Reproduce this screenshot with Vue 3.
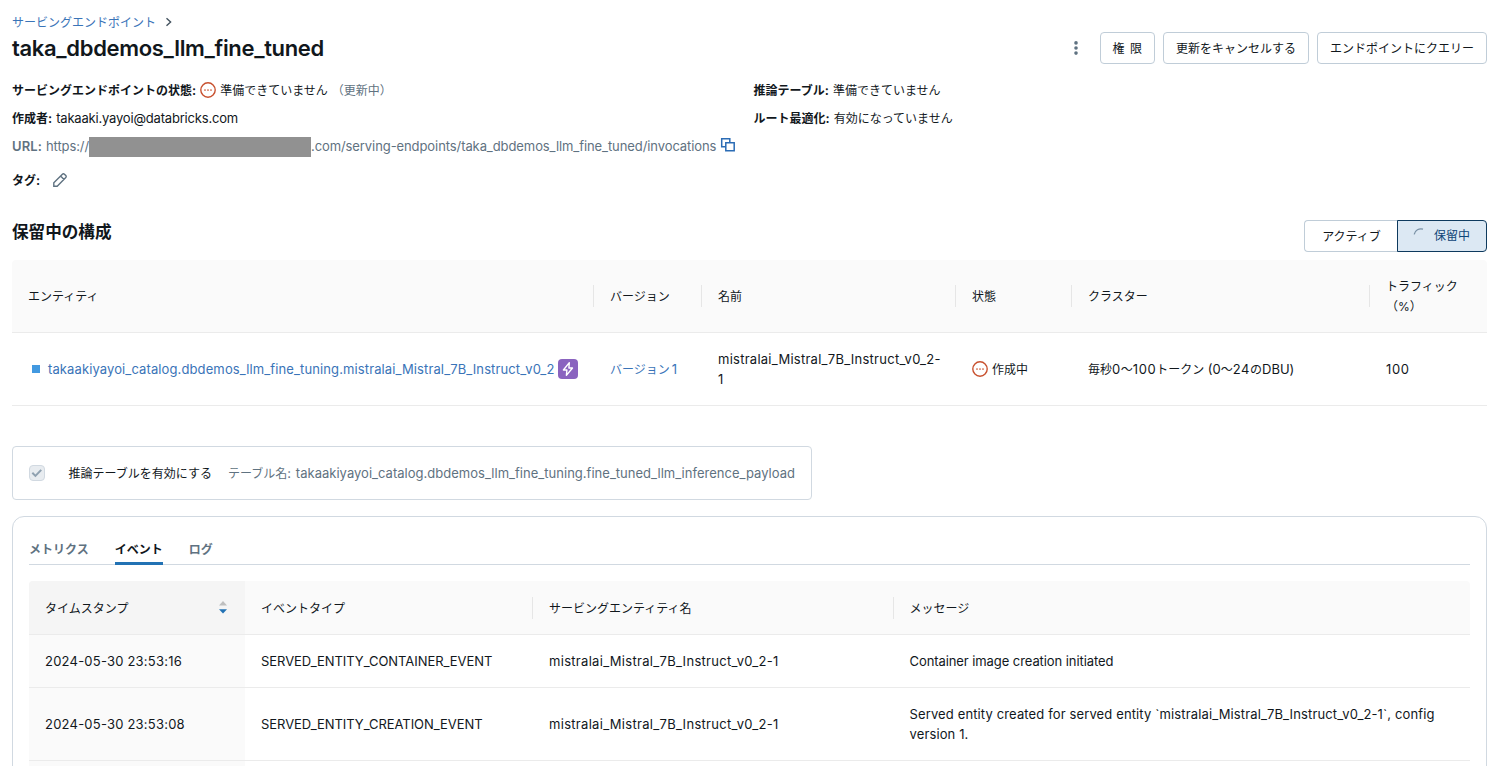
<template>
  <div class="page">
    <nav class="breadcrumb">
      <a href="#" class="link ja">サービングエンドポイント</a>
      <svg class="breadcrumb__arrow" viewBox="0 0 8 10" aria-hidden="true">
        <path d="M1.5 1.2L5.6 5l-4.1 3.8" fill="none" stroke="currentColor" stroke-width="1.4" />
      </svg>
    </nav>

    <header class="header">
      <h1 class="header__title">taka_dbdemos_llm_fine_tuned</h1>
      <div class="header__actions">
        <svg class="header__more" viewBox="0 0 16 16" aria-label="more">
          <circle cx="8" cy="2.9" r="1.8" />
          <circle cx="8" cy="8" r="1.8" />
          <circle cx="8" cy="13.1" r="1.8" />
        </svg>
        <button class="btn btn--short">権 限</button>
        <button class="btn">更新をキャンセルする</button>
        <button class="btn">エンドポイントにクエリー</button>
      </div>
    </header>

    <section class="details">
      <div class="details__col">
        <div class="details__row">
          <b>サービングエンドポイントの状態<i class="en">:</i></b>
          <svg class="status" viewBox="0 0 16 16" aria-hidden="true">
            <circle cx="8" cy="8" r="7.2" class="status__ring" />
            <circle v-for="x in [5, 8, 11]" :key="x" :cx="x" cy="8" r="0.85" class="status__dot" />
          </svg>
          <span class="ja">準備できていません</span>
          <span class="ja muted">（更新中）</span>
        </div>
        <div class="details__row">
          <b>作成者<i class="en">:</i></b>
          <span class="en en--email">takaaki.yayoi@databricks.com</span>
        </div>
        <div class="details__row muted">
          <b class="en en--label">URL:</b>
          <span class="url">
            <span class="en en--scheme">https://</span>
            <span class="url__mask"></span>
            <span class="en en--url">.com/serving-endpoints/taka_dbdemos_llm_fine_tuned/invocations</span>
          </span>
          <svg class="copy" viewBox="0 0 16 16" aria-hidden="true">
            <path
              d="M5.2 9.8H1.7V1.7H9.8v3.4M5.8 5.8h8.4v8H5.8z"
              fill="none"
              stroke="currentColor"
              stroke-width="1.5"
            />
          </svg>
        </div>
        <div class="details__row details__row--tags">
          <b>タグ<i class="en">:</i></b>
          <svg class="pencil" viewBox="0 0 16 16" aria-hidden="true">
            <path
              d="M1.8 14.2v-3.4l8.6-8.6a1.4 1.4 0 0 1 2 0l1.4 1.4a1.4 1.4 0 0 1 0 2l-8.6 8.6zM8.6 4l3.4 3.4"
              fill="none"
              stroke="currentColor"
              stroke-width="1.4"
            />
          </svg>
        </div>
      </div>
      <div class="details__col">
        <div class="details__row">
          <b>推論テーブル<i class="en">:</i></b>
          <span class="ja">準備できていません</span>
        </div>
        <div class="details__row">
          <b>ルート最適化<i class="en">:</i></b>
          <span class="ja">有効になっていません</span>
        </div>
      </div>
    </section>

    <section class="config">
      <h2 class="config__title">保留中の構成</h2>
      <div class="segmented">
        <button class="segmented__item">アクティブ</button>
        <button class="segmented__item segmented__item--active">
          <svg class="spinner" viewBox="0 0 16 16" aria-hidden="true">
            <path d="M2.2 6.4A6.8 6.8 0 0 1 11 1.2" fill="none" stroke="currentColor" stroke-width="1.3" />
          </svg>
          保留中
        </button>
      </div>
    </section>

    <div class="table table--entities">
      <div class="table__row table__row--head">
        <div v-for="col in entityColumns" :key="col" class="table__cell">{{ col }}</div>
      </div>
      <div class="table__row">
        <div class="table__cell table__cell--entity">
          <span class="marker"></span>
          <a href="#" class="link en en--entity">takaakiyayoi_catalog.dbdemos_llm_fine_tuning.mistralai_Mistral_7B_Instruct_v0_2</a>
          <svg class="bolt" viewBox="0 0 20 20" aria-hidden="true">
            <rect width="20" height="20" rx="4" fill="#8a63bf" />
            <path
              d="M11.3 3.6L5.4 11h3.5l-.5 5.4L14.5 9h-3.6z"
              fill="none"
              stroke="#fff"
              stroke-width="1.4"
              stroke-linejoin="round"
            />
          </svg>
        </div>
        <div class="table__cell"><a href="#" class="link">バージョン<span class="en en--version">1</span></a></div>
        <div class="table__cell en en--name">mistralai_Mistral_7B_Instruct_v0_2-<br />1</div>
        <div class="table__cell table__cell--status">
          <svg class="status" viewBox="0 0 16 16" aria-hidden="true">
            <circle cx="8" cy="8" r="7.2" class="status__ring" />
            <circle v-for="x in [5, 8, 11]" :key="x" :cx="x" cy="8" r="0.85" class="status__dot" />
          </svg>
          <span class="ja">作成中</span>
        </div>
        <div class="table__cell">
          <div>毎秒<span class="en en--num">0</span>〜<span class="en en--num">100</span>トークン <span class="en">(0</span>〜<span class="en en--num">24</span>の<span class="en">DBU)</span></div>
        </div>
        <div class="table__cell en en--num">100</div>
      </div>
    </div>

    <div class="inference">
      <span class="checkbox">
        <svg viewBox="0 0 14 14" aria-hidden="true">
          <path d="M2.4 7l3.2 3.2 6-6.2" fill="none" stroke="currentColor" stroke-width="2.1" />
        </svg>
      </span>
      <span class="inference__label ja">推論テーブルを有効にする</span>
      <span class="muted">テーブル名<span class="en en--colon">: </span><span class="en en--payload">takaakiyayoi_catalog.dbdemos_llm_fine_tuning.fine_tuned_llm_inference_payload</span></span>
    </div>

    <section class="panel">
      <div class="tabs">
        <a
          v-for="tab in tabs"
          :key="tab"
          href="#"
          class="tabs__item"
          :class="{ 'tabs__item--active': tab === activeTab }"
        >{{ tab }}</a>
      </div>

      <div class="table table--events">
        <div class="table__row table__row--head">
          <div class="table__cell table__cell--sorted">
            タイムスタンプ
            <svg class="sorter" viewBox="0 0 8 13" aria-hidden="true">
              <path d="M0 4.4L4 0l4 4.4z" fill="#bfbfbf" />
              <path d="M0 8.2h8l-4 4.4z" fill="#2272b4" />
            </svg>
          </div>
          <div class="table__cell">イベントタイプ</div>
          <div class="table__cell">サービングエンティティ名</div>
          <div class="table__cell">メッセージ</div>
        </div>
        <div v-for="event in events" :key="event.time" class="table__row" :class="{ 'table__row--tall': event.tall }">
          <div class="table__cell table__cell--sorted en en--time">{{ event.time }}</div>
          <div class="table__cell en en--type">{{ event.type }}</div>
          <div class="table__cell en en--served">{{ event.entity }}</div>
          <div class="table__cell en" :class="event.tall ? 'en--long' : 'en--message'">{{ event.message }}</div>
        </div>
      </div>
    </section>
  </div>
</template>

<script setup>
import { ref } from 'vue'

const entityColumns = ['エンティティ', 'バージョン', '名前', '状態', 'クラスター', 'トラフィック（%）']

const tabs = ['メトリクス', 'イベント', 'ログ']
const activeTab = ref('イベント')

const events = [
  {
    time: '2024-05-30 23:53:16',
    type: 'SERVED_ENTITY_CONTAINER_EVENT',
    entity: 'mistralai_Mistral_7B_Instruct_v0_2-1',
    message: 'Container image creation initiated',
  },
  {
    time: '2024-05-30 23:53:08',
    type: 'SERVED_ENTITY_CREATION_EVENT',
    entity: 'mistralai_Mistral_7B_Instruct_v0_2-1',
    message: 'Served entity created for served entity `mistralai_Mistral_7B_Instruct_v0_2-1`, config version 1.',
    tall: true,
  },
  { time: '', type: '', entity: '', message: '' },
]
</script>

<style>
body {
  margin: 0;
  overflow: hidden;
}
</style>

<style scoped>
.page {
  box-sizing: border-box;
  height: 766px;
  overflow: hidden;
  padding: 12px 2px 0 12px;
  background: #fff;
  color: #11171c;
  font-family: Inter, "Noto Sans CJK JP", sans-serif;
  font-size: 12px;
  line-height: 20px;
}

.link {
  color: #3a74b8;
  text-decoration: none;
}
.muted { color: #5f7281; }

.ja { padding-top: 2px; }

/* latin runs are set one size up from the kana */
.en {
  font-size: 13px;
  font-style: normal;
}
.en--label { letter-spacing: .1px; }
.en--email { letter-spacing: -.19px; }
.en--scheme { letter-spacing: -.1px; }
.en--url { letter-spacing: -.085px; }
.en--entity { letter-spacing: .115px; }
.en--name { letter-spacing: .26px; }
.en--num { letter-spacing: .6px; }
.en--version { margin-left: 2px; }
.en--colon { letter-spacing: .6px; }
.en--payload { letter-spacing: .02px; }
.en--time { letter-spacing: .22px; }
.en--type { letter-spacing: -.05px; }
.en--served { letter-spacing: .3px; }
.en--message { letter-spacing: -.08px; }
.en--long { letter-spacing: .13px; }

/* header */
.breadcrumb {
  display: flex;
  align-items: center;
  height: 20px;
}
.breadcrumb__arrow {
  width: 8px;
  height: 10px;
  margin-left: 9px;
  color: #44535f;
}

.header {
  display: flex;
  align-items: center;
  justify-content: space-between;
  height: 32px;
}
.header__title {
  margin: 0;
  font-size: 22px;
  font-weight: 600;
  letter-spacing: -.33px;
  line-height: 28px;
}
.header__actions {
  display: flex;
  align-items: center;
  gap: 8px;
}
.header__more {
  width: 16px;
  height: 16px;
  margin-right: 8px;
  fill: #5f7281;
}

.btn {
  box-sizing: border-box;
  height: 32px;
  padding: 2px 12px 0;
  border: 1px solid #c0cdd8;
  border-radius: 4px;
  background: #fff;
  color: inherit;
  font: inherit;
  white-space: nowrap;
}
.btn--short { word-spacing: 2px; }

/* details */
.details {
  display: grid;
  grid-template-columns: 741.5px 1fr;
  height: 126px;
  padding-top: 16px;
  box-sizing: border-box;
}
.details__row {
  display: flex;
  align-items: center;
  height: 20px;
  margin-bottom: 8px;
  gap: 4px;
  white-space: nowrap;
}
.details__row b { font-weight: 600; }
.details__row--tags {
  margin-top: 14px;
  gap: 12px;
}

.status {
  flex: none;
  width: 16px;
  height: 16px;
}
.status__ring {
  fill: none;
  stroke: #c8512f;
  stroke-width: 1.4;
}
.status__dot { fill: #c8512f; }

.url {
  display: flex;
  align-items: center;
}
.url__mask {
  width: 222px;
  height: 20px;
  margin-top: 2px;
  background: #919191;
}
.copy {
  width: 16px;
  height: 16px;
  margin-bottom: 2px;
  color: #2b6cb5;
}
.pencil {
  width: 16px;
  height: 16px;
  color: #5f7281;
}

/* pending configuration */
.config {
  display: flex;
  justify-content: space-between;
  height: 70px;
  box-sizing: border-box;
  padding-top: 30px;
}
.config__title {
  margin: 0;
  font-size: 16.6px;
  font-weight: 600;
  line-height: 24px;
}
.segmented { display: flex; }
.segmented__item {
  box-sizing: border-box;
  width: 94px;
  height: 32px;
  border: 1px solid #c0cdd8;
  border-right: 0;
  border-radius: 4px 0 0 4px;
  background: #fff;
  color: inherit;
  font: inherit;
  padding: 2px 0 0;
}
.segmented__item--active {
  display: flex;
  align-items: center;
  justify-content: flex-end;
  gap: 6px;
  width: 90px;
  margin-left: -1px;
  padding: 0 16px 0 0;
  border: 1px solid #0e3a5e;
  border-radius: 0 4px 4px 0;
  background: #dce8f3;
  color: #0e4578;
}
.spinner {
  width: 16px;
  height: 16px;
  color: #7890a5;
}

/* tables */
.table__row {
  display: grid;
  box-sizing: border-box;
  border-bottom: 1px solid #ebebeb;
}
.table__cell {
  display: flex;
  align-items: center;
  padding: 0 16px;
}
.table__row--head {
  background: #fafafa;
  border-radius: 4px 4px 0 0;
}
.table__row--head .table__cell {
  position: relative;
  padding-top: 2px;
}
.table__row--head .table__cell:not(:last-child):not(.table__cell--sorted)::after {
  content: "";
  position: absolute;
  right: 0;
  top: 50%;
  width: 1px;
  height: 22px;
  margin-top: -11px;
  background: #e6e6e6;
}

.table--entities .table__row {
  grid-template-columns: 582px 108px 254px 116px 298px 117px;
  height: 73px;
}
.table--entities .table__cell--entity { padding: 0 0 0 20px; }
.table__cell--status { gap: 4px; }

.marker {
  width: 8px;
  height: 8px;
  margin-right: 8px;
  background: #4299e0;
}
.bolt {
  width: 20px;
  height: 20px;
  margin-left: 4px;
}

/* inference table */
.inference {
  box-sizing: border-box;
  display: flex;
  align-items: center;
  width: 800px;
  height: 54px;
  margin: 40px 0 16px;
  padding: 0 16px;
  border: 1px solid #d1d9e1;
  border-radius: 4px;
  white-space: nowrap;
}
.inference .en { white-space: pre; }
.inference__label { margin: 0 16px 0 24px; }
.checkbox {
  box-sizing: border-box;
  width: 16px;
  height: 16px;
  border: 1px solid #d1d9e1;
  border-radius: 4px;
  background: #e8ecf0;
  color: #8fa1b0;
}
.checkbox svg { display: block; }

/* metrics / events / logs */
.panel {
  height: 400px;
  padding: 16px 16px 0;
  border: 1px solid #d1d9e1;
  border-radius: 12px;
}
.tabs {
  display: flex;
  gap: 26px;
  height: 31px;
  margin-bottom: 16px;
  border-bottom: 1px solid #d1d9e1;
}
.tabs__item {
  height: 27px;
  padding-top: 2px;
  line-height: 30px;
  box-sizing: content-box;
  color: #5f7281;
  font-weight: 600;
  text-decoration: none;
}
.tabs__item--active {
  border-bottom: 3px solid #2272b4;
  color: #11171c;
}

.table--events .table__row {
  grid-template-columns: 216px 288px 360.5px 1fr;
  height: 53px;
}
.table--events .table__row--head { height: 54px; }
.table--events .table__row--tall { height: 73px; }
.table__cell--sorted {
  justify-content: space-between;
  background: #fafafa;
}
.table__row--head .table__cell--sorted {
  background: #f5f5f5;
  border-radius: 4px 0 0 0;
}
.sorter {
  width: 8px;
  height: 13px;
  margin: 0 2px 2px 0;
}
</style>
